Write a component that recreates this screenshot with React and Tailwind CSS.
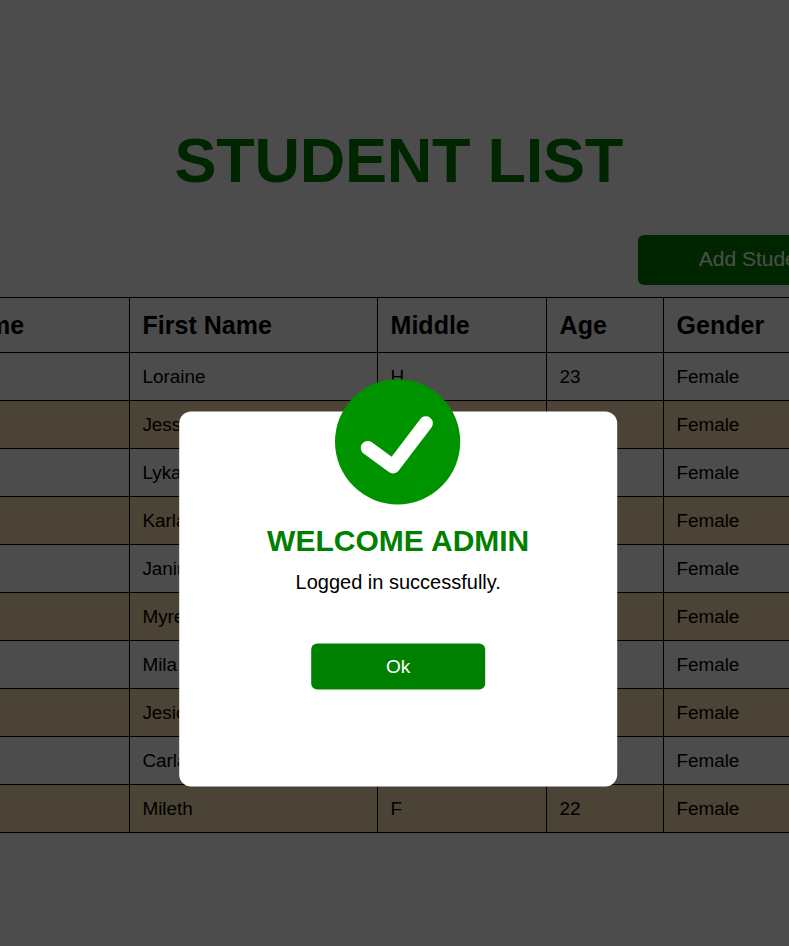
const students = [
  ['', 'Loraine', 'H', '23', 'Female'],
  ['', 'Jessa', '', '', 'Female'],
  ['', 'Lyka', '', '', 'Female'],
  ['', 'Karla', '', '', 'Female'],
  ['', 'Janine', '', '', 'Female'],
  ['', 'Myrel', '', '', 'Female'],
  ['', 'Mila', '', '', 'Female'],
  ['', 'Jesica', '', '', 'Female'],
  ['', 'Carla', '', '', 'Female'],
  ['', 'Mileth', 'F', '22', 'Female'],
];

const columns = ['Last Name', 'First Name', 'Middle', 'Age', 'Gender'];

function StudentTable() {
  return (
    <div className="mt-3 -ml-[115px] w-[1020px] shrink-0 border-t border-black">
      <div className="grid h-[55px] grid-cols-[245px_248px_169px_117px_241px] border-b border-black text-[25px] font-bold">
        {columns.map((name) => (
          <div key={name} className="flex items-center border-r border-black pt-0.5 pl-[12.6px] whitespace-nowrap">
            {name}
          </div>
        ))}
      </div>
      {students.map((row, r) => (
        <div
          key={r}
          className="grid h-12 grid-cols-[245px_248px_169px_117px_241px] border-b border-black text-[18.9px] odd:bg-[#f8dfb4] even:bg-white"
        >
          {row.map((cell, c) => (
            <div key={c} className="flex items-center border-r border-black pt-0.5 pl-[12.4px]">
              {cell}
            </div>
          ))}
        </div>
      ))}
    </div>
  );
}

function SuccessIcon() {
  return (
    <svg className="absolute -top-[33px] left-[155px] h-[127px] w-[127px]" viewBox="0 0 127 127">
      <circle cx="63.4" cy="63.3" r="62.6" fill="#009300" />
      <path d="M33.5 69.4 L58.8 87.9 L91.7 44.7" fill="none" stroke="#fff" strokeWidth="14" strokeLinecap="round" strokeLinejoin="round" />
    </svg>
  );
}

function WelcomeDialog() {
  return (
    <div className="absolute inset-0 flex items-start justify-center bg-black/70 pt-[411px] pl-[7px]">
      <div role="dialog" className="relative flex h-[375px] w-[438px] translate-x-[0.2px] translate-y-[0.5px] flex-col items-center rounded-xl bg-white">
        <SuccessIcon />
        <h2 className="mt-[110.5px] text-[30px] leading-9 font-bold text-[#008000]">WELCOME ADMIN</h2>
        <p className="mt-[11.5px] text-[20px] leading-6">Logged in successfully.</p>
        <button className="mt-[50px] h-[46px] w-[174px] rounded-md bg-[#008000] text-[19px] text-white">Ok</button>
      </div>
    </div>
  );
}

export default function App() {
  return (
    <div className="relative h-[946px] w-[789px] overflow-hidden bg-white font-['Liberation_Sans',Arial,sans-serif] text-black">
      <div className="flex h-full flex-col">
        <h1 className="mt-[124px] pl-[8.5px] text-center text-[63px] leading-[72px] font-bold tracking-[-0.25px] text-[#008000]">STUDENT LIST</h1>
        <button className="mt-[39px] ml-[638px] h-[50px] w-[237px] shrink-0 rounded-md bg-[#008000] pb-0.5 text-[21px] text-white">
          Add Student
        </button>
        <StudentTable />
      </div>
      <WelcomeDialog />
    </div>
  );
}
